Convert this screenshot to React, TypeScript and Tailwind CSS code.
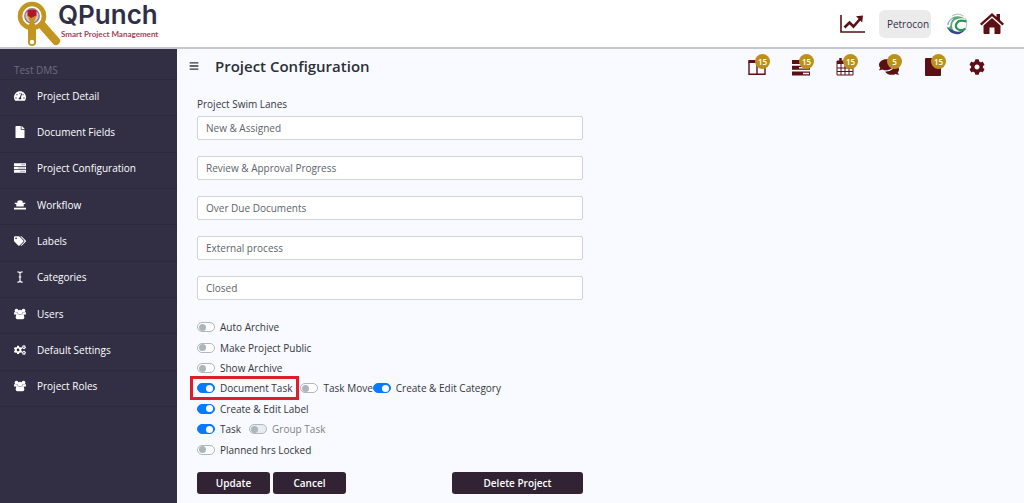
import type { ReactNode } from "react";
import { FaTachometerAlt, FaFile, FaTags, FaCogs, FaCog, FaComments, FaBars } from "react-icons/fa";

const ICON = "h-3 w-3";

function ServerIcon({ className }: { className: string }) {
  return (
    <svg viewBox="0 0 18 16" className={className} fill="currentColor">
      <path d="M0 1h18v4H0zM0 6h18v4H0zM0 11h18v4H0z" />
      <path d="M11 2.3h5.6v1.4H11zM6 7.3h10.6v1.4H6zM9 12.3h7.6v1.4H9z" fill="#a9a7b5" />
    </svg>
  );
}

function WorkflowIcon() {
  return (
    <svg viewBox="0 0 16 14" className={ICON} fill="currentColor">
      <path d="M4.5 1.5Q8 0 11.5 1.5V4H15v1.8h-2V9H3V5.8H1V4h3.5zM0 10.5h16V13H0z" />
    </svg>
  );
}

function CursorIcon() {
  return (
    <svg viewBox="0 0 12 14" className={ICON} fill="none" stroke="currentColor" strokeWidth="1.3">
      <path d="M3 1q3 0 3 2q0-2 3-2M6 3v8M3 13q3 0 3-2q0 2 3 2M4.5 7h3" />
    </svg>
  );
}

function GroupIcon() {
  return (
    <svg viewBox="0 0 18 16" className={ICON} fill="currentColor">
      <circle cx="3.7" cy="2.8" r="2.8" />
      <circle cx="14.3" cy="2.8" r="2.8" />
      <circle cx="9" cy="5.2" r="3.5" />
      <path d="M0 8.8V7q0-2 1.6-2 2 1.2 3.6.4 0 2 1 3zM18 8.8V7q0-2-1.6-2-2 1.2-3.6.4 0 2-1 3zM5.8 8q3.2 2 6.4 0Q15.5 8.5 15.5 13.4 15.5 16 12.8 16H5.2Q2.5 16 2.5 13.4 2.5 8.5 5.8 8z" />
    </svg>
  );
}

function BrandMark() {
  return (
    <svg viewBox="0 0 46 46" className="h-[46px] w-[46px]" fill="none">
      <path d="M24 23L39 40" stroke="#c2951f" strokeWidth="8" strokeLinecap="round" />
      <circle cx="15" cy="15" r="12" fill="#fff" stroke="#c2951f" strokeWidth="4.6" />
      <path d="M15 26V41" stroke="#c2951f" strokeWidth="8" strokeLinecap="round" />
      <circle cx="15" cy="15" r="7.2" fill="#d9c3c4" stroke="#927b8f" strokeWidth="1.4" />
      <path d="M10.5 9.5q4.5-2 9 0v5.500l-3 3h-3l-3-3z" fill="#b51428" />
      <path d="M11 14.500l3 2.500 2-1 3-1.500q0 4-2 6v7h-4v-7q-2-2-2-6z" fill="#c2951f" />
      <circle cx="15" cy="41" r="2.200" fill="#fff" />
    </svg>
  );
}

function TrendIcon() {
  return (
    <svg viewBox="0 0 25 20" className="h-5 w-[25px]" fill="none" stroke="#5c1014">
      <path d="M1 1V18H25" strokeWidth="1.6" />
      <path d="M4.500 13.500l5-5 4 4 7-8" strokeWidth="2.6" />
      <path d="M16 2.200l7-.8-.8 7z" fill="#5c1014" stroke="none" />
    </svg>
  );
}

function GlobeLogo() {
  return (
    <svg viewBox="0 0 22 22" className="h-[22px] w-[22px]" fill="none">
      <path d="M6 3Q12-1 17.500 3.200M19 5q3 5 .5 11" stroke="#b5cfc2" strokeWidth="1.2" />
      <path d="M5 5.500Q11 1 19 5.500q-6-1-10 1.500-3 2-3 6 0 3 2 4.500-5 0-6.500-3 3 0 3-3Q4.500 8 8 5.500z" fill="#3d9a62" opacity=".85" />
      <path d="M8 5Q2 7 2 12" stroke="#8d9cc9" strokeWidth="1.2" />
      <path d="M20.500 8.500Q13 6 10.500 10.500q-2 5 3 6.500 3.500.5 6-1.500" stroke="#279653" strokeWidth="2.2" />
      <path d="M.5 13.500q2 3 6 3.500 5 3.500 12.500 0Q15 22 9.500 21 3 20 .5 13.500z" fill="#39458f" />
    </svg>
  );
}

function HouseIcon() {
  return (
    <svg viewBox="0 0 24 22" className="h-[22px] w-6" fill="#5c1014">
      <path d="M12 0l4.500 4V1h3.500v6l4 3.700-1.500 1.800L12 3.200 1.500 12.500 0 10.700z" />
      <path d="M12 5l8.500 7.400V20q0 1-1 1H14.500v-6.500h-5V21H4.500q-1 0-1-1v-7.600z" />
    </svg>
  );
}

function BoardIcon() {
  return (
    <svg viewBox="0 0 18 17" className="h-[17px] w-[18px]" fill="none" stroke="#5c1014">
      <path d="M1 3v12.200h16V3M9 3v12" strokeWidth="1.4" />
      <path d="M.3 2.500h17.400" strokeWidth="3" />
    </svg>
  );
}

function BarsIcon() {
  return (
    <svg viewBox="0 0 18 17" className="h-[17px] w-[18px]" fill="#5c1014">
      <path fillRule="evenodd" d="M0 1h18v4H0zM0 6.700h18v4H0zM7 8v1.400h10V8zM0 12.500h18v4H0zM11 13.700v1.600h6v-1.600z" />
    </svg>
  );
}

function CalendarIcon() {
  return (
    <svg viewBox="0 0 18 18" className="h-[18px] w-[18px]" fill="none" stroke="#5c1014">
      <path d="M1 3h16v14H1zM1 10h16M1 13.500h16M5 6v11M9 6v11M13 6v11" strokeWidth="1" />
      <path d="M1 4.500h16" strokeWidth="3" />
      <path d="M4.500 0v4M13 0v4" strokeWidth="2.500" />
    </svg>
  );
}

function NoteIcon() {
  return (
    <svg viewBox="0 0 16 18" className="h-[18px] w-4" fill="#5c1014">
      <path d="M1 0h14q1 0 1 1v16q0 1-1 1H1q-1 0-1-1V1q0-1 1-1z" />
    </svg>
  );
}

const menu: { label: string; icon: ReactNode }[] = [
  { label: "Project Detail", icon: <FaTachometerAlt className={ICON} /> },
  { label: "Document Fields", icon: <FaFile className={ICON} /> },
  { label: "Project Configuration", icon: <ServerIcon className={ICON} /> },
  { label: "Workflow", icon: <WorkflowIcon /> },
  { label: "Labels", icon: <FaTags className={ICON} /> },
  { label: "Categories", icon: <CursorIcon /> },
  { label: "Users", icon: <GroupIcon /> },
  { label: "Default Settings", icon: <FaCogs className={ICON} /> },
  { label: "Project Roles", icon: <GroupIcon /> },
];

const tools: { name: string; count?: number; icon: ReactNode }[] = [
  { name: "Board", count: 15, icon: <BoardIcon /> },
  { name: "Tasks", count: 15, icon: <BarsIcon /> },
  { name: "Calendar", count: 15, icon: <CalendarIcon /> },
  { name: "Messages", count: 5, icon: <FaComments className="h-[18px] w-5" /> },
  { name: "Documents", count: 15, icon: <NoteIcon /> },
  { name: "Settings", icon: <FaCog className="h-4 w-4" /> },
];

const lanes = ["New & Assigned", "Review & Approval Progress", "Over Due Documents", "External process", "Closed"];

function Toggle({ label, on = false, disabled = false, marked = false }: { label: string; on?: boolean; disabled?: boolean; marked?: boolean }) {
  return (
    <label className={`relative flex items-center gap-[5px] whitespace-nowrap ${disabled ? "text-[#7d838a]" : "text-[#33373c]"}`}>
      <input
        type="checkbox"
        defaultChecked={on}
        disabled={disabled}
        className="flex h-[10px] w-[18px] shrink-0 appearance-none items-center rounded-full border border-[#b0b7be] bg-white px-px before:h-[7px] before:w-[7px] before:rounded-full before:bg-[#adb5bd] checked:justify-end checked:border-[#0a7bff] checked:bg-[#0a7bff] checked:before:bg-white disabled:bg-[#e9ecef]"
      />
      {label}
      {marked && <span className="pointer-events-none absolute -inset-x-[7px] -inset-y-1 border-3 border-[#dc1f2b]" />}
    </label>
  );
}

const button = "h-[22px] rounded-[3px] bg-[#312333] font-semibold text-white";

export default function App() {
  return (
    <div className="flex min-h-screen flex-col bg-[#f9faff] font-['Open_Sans','Noto_Sans',sans-serif] text-[10px] leading-4 text-[#33373c]">
      <header className="flex h-[49px] items-center justify-between border-b-2 border-[#c6c6cf] bg-white pr-5 pl-[17px]">
        <a href="#home" className="flex items-start">
          <BrandMark />
          <span className="-ml-[5px] flex flex-col">
            <span className="font-[Inter,sans-serif] text-[26px] leading-7 font-semibold text-[#312f45]">QPunch</span>
            <span className="pl-[3px] font-[Lato,sans-serif] text-[8px] leading-[10px] font-bold text-[#ad3c55]">Smart Project Management</span>
          </span>
        </a>
        <div className="flex items-center text-[#5c1014]">
          <a href="#reports" aria-label="Reports"><TrendIcon /></a>
          <button className="ml-[14px] h-7 w-[52px] rounded-[6px] bg-[#ebebeb] pl-[6px] text-[#312f45]">Petrocon</button>
          <a href="#company" aria-label="Company" className="ml-[15px]"><GlobeLogo /></a>
          <a href="#dashboard" aria-label="Dashboard" className="ml-3"><HouseIcon /></a>
        </div>
      </header>
      <div className="flex flex-1">
        <nav className="w-[177px] shrink-0 bg-[#322f45] pt-[13px] text-white">
          <p className="mb-px pl-[14px] text-[#6d6b7c]">Test DMS</p>
          <ul className="grid min-h-[328px] auto-rows-fr border-b border-[#2b293c]">
            {menu.map((item) => (
              <li key={item.label} className="border-t border-[#2b293c]">
                <a href="#menu" className="flex h-full items-center gap-[11px] pb-1 pl-[14px]">
                  {item.icon}
                  {item.label}
                </a>
              </li>
            ))}
          </ul>
        </nav>
        <main className="min-w-0 flex-1 pt-[3px] pr-[37px] pl-5">
          <div className="flex h-7 items-center justify-between">
            <div className="flex items-center gap-4">
              <button aria-label="Menu" className="-ml-2"><FaBars className="h-[10px] w-[10px]" /></button>
              <h1 className="text-[15px] leading-5 font-semibold text-[#2b2f36]">Project Configuration</h1>
            </div>
            <div className="flex items-center gap-6 pt-[2px] text-[#5c1014]">
              {tools.map((tool) => (
                <button key={tool.name} aria-label={tool.name} className="relative flex h-5 w-5 items-center justify-center">
                  {tool.icon}
                  {tool.count && (
                    <span className="absolute -top-[3px] -right-[3px] flex h-[15px] w-[15px] items-center justify-center rounded-full bg-[#bb901f] text-[8px] leading-none font-semibold text-white">
                      {tool.count}
                    </span>
                  )}
                </button>
              ))}
            </div>
          </div>
          <form className="w-[386px] pt-4">
            <p>Project Swim Lanes</p>
            <div className="mt-1 grid gap-4">
              {lanes.map((lane) => (
                <input key={lane} aria-label={lane} defaultValue={lane} className="h-6 w-full rounded-[2px] border border-[#ced4da] bg-white px-2 text-[#5c636a]" />
              ))}
            </div>
            <div className="mt-[17px] grid min-h-[143px] auto-rows-fr items-center">
              <div className="flex"><Toggle label="Auto Archive" /></div>
              <div className="flex"><Toggle label="Make Project Public" /></div>
              <div className="flex"><Toggle label="Show Archive" /></div>
              <div className="flex">
                <Toggle label="Document Task" on marked />
                <span className="w-2 shrink-0" />
                <Toggle label="Task Move" />
                <Toggle label="Create & Edit Category" on />
              </div>
              <div className="flex"><Toggle label="Create & Edit Label" on /></div>
              <div className="flex gap-2">
                <Toggle label="Task" on />
                <Toggle label="Group Task" disabled />
              </div>
              <div className="flex"><Toggle label="Planned hrs Locked" /></div>
            </div>
            <div className="mt-3 flex gap-[3px]">
              <button type="button" className={`${button} w-[73px]`}>Update</button>
              <button type="button" className={`${button} w-[73px]`}>Cancel</button>
              <button type="button" className={`${button} ml-auto w-[131px]`}>Delete Project</button>
            </div>
          </form>
        </main>
      </div>
    </div>
  );
}
